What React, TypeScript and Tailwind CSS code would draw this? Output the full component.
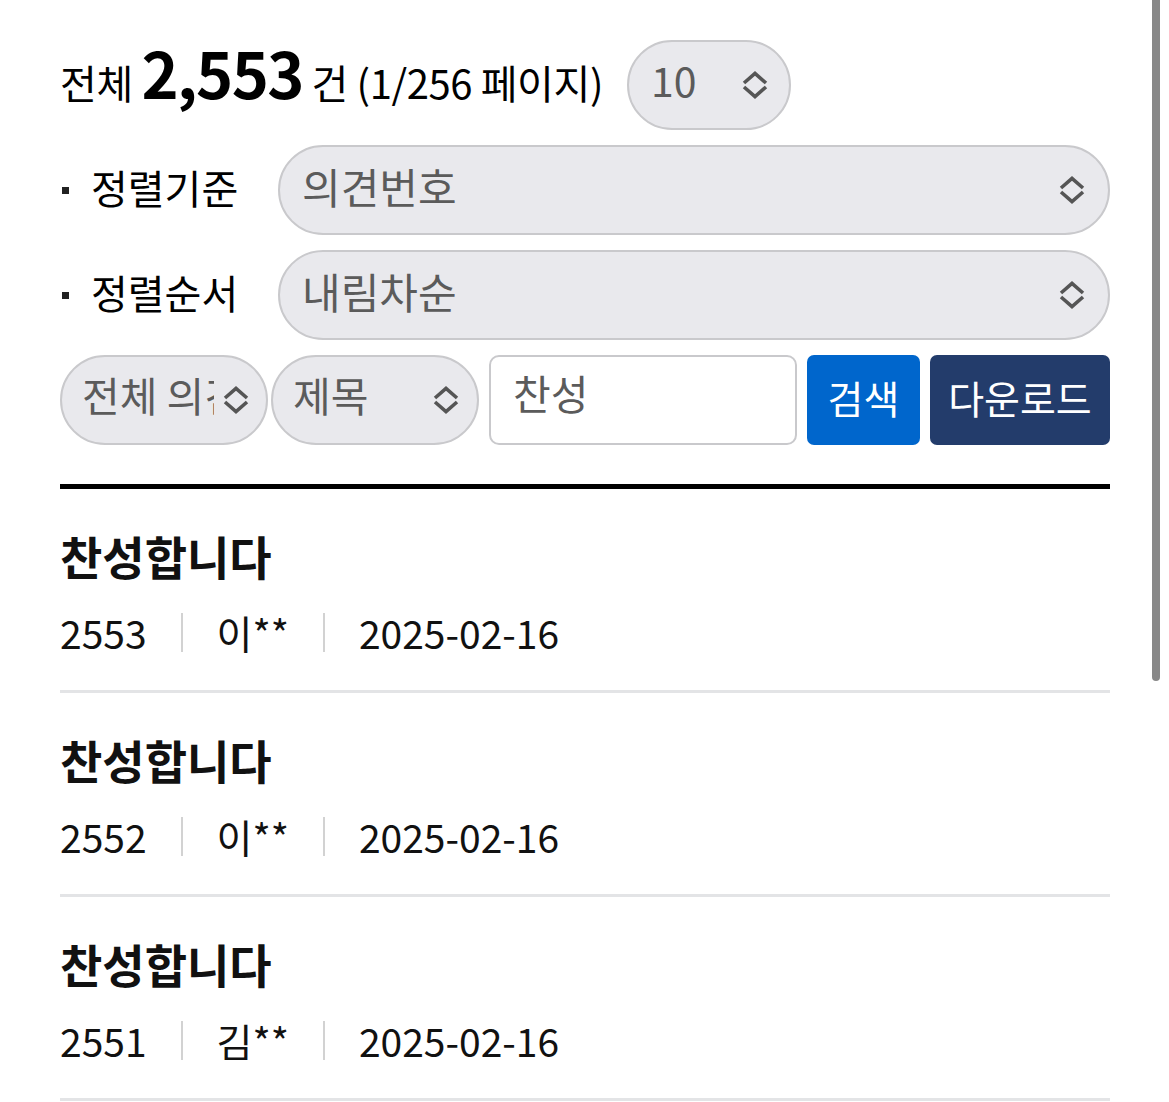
import { useState } from "react"

// Up/down chevron used by every select box
function UpDown() {
  return (
    <svg width="28" height="30" viewBox="0 0 28 30" fill="none" className="shrink-0">
      <path d="M3 13 L14 3.5 L25 13" stroke="#555" strokeWidth="3.6" />
      <path d="M3 17 L14 26.5 L25 17" stroke="#555" strokeWidth="3.6" />
    </svg>
  )
}

function FakeSelect({
  value,
  className = "",
  pad = "pl-[22px] pr-[22px]",
  text = "text-[42px]",
}: {
  value: string
  className?: string
  pad?: string
  text?: string
}) {
  return (
    <div
      className={`flex h-[90px] items-center gap-2 rounded-full border-2 border-[#c9c9cc] bg-[#e9e9ed] ${pad} ${className}`}
    >
      <span className={`min-w-0 flex-1 overflow-hidden whitespace-nowrap pb-[10px] text-[#5b5b5b] ${text}`}>
        {value}
      </span>
      <UpDown />
    </div>
  )
}

const opinions = [
  { no: 2553, name: "이**", date: "2025-02-16" },
  { no: 2552, name: "이**", date: "2025-02-16" },
  { no: 2551, name: "김**", date: "2025-02-16" },
]

export default function App() {
  const [keyword, setKeyword] = useState("찬성")

  return (
    <div className="relative min-h-[1102px] overflow-hidden bg-white font-['Noto_Sans_CJK_KR','Noto_Sans',sans-serif] text-black">
      <div className="pl-[60px] pr-[59px] pt-[40px]">
        {/* count + page size */}
        <div className="flex h-[89px] items-center">
          <p className="mb-[26px] text-[40px] leading-none tracking-[-0.4px]">
            전체 <strong className="text-[63px] font-bold tracking-[-1.5px]">2,553</strong> 건 (1/256 페이지)
          </p>
          <FakeSelect
            value="10"
            className="ml-[24px] h-[89px] w-[164px]"
            pad="pl-[22px] pr-[20px]"
            text="text-[41px]"
          />
        </div>

        {/* sort options */}
        <div className="mt-[16px] flex items-center">
          <div className="flex w-[218px] shrink-0 items-center">
            <span className="ml-[2px] h-[7px] w-[7px] bg-[#222]" />
            <span className="ml-[22px] pb-[6px] text-[40px]">정렬기준</span>
          </div>
          <FakeSelect value="의견번호" className="flex-1" pad="pl-[22px] pr-[22px]" />
        </div>
        <div className="mt-[15px] flex items-center">
          <div className="flex w-[218px] shrink-0 items-center">
            <span className="ml-[2px] h-[7px] w-[7px] bg-[#222]" />
            <span className="ml-[22px] pb-[6px] text-[40px]">정렬순서</span>
          </div>
          <FakeSelect value="내림차순" className="flex-1" pad="pl-[22px] pr-[22px]" />
        </div>

        {/* search bar */}
        <div className="mt-[15px] flex h-[90px] items-stretch">
          <FakeSelect value="전체 의견" className="w-[208px]" pad="pl-[20px] pr-[16px]" text="text-[41px]" />
          <FakeSelect value="제목" className="ml-[3px] w-[208px]" pad="pl-[20px] pr-[17px]" text="text-[41px]" />
          <input
            value={keyword}
            onChange={(e) => setKeyword(e.target.value)}
            className="ml-[10px] w-[308px] rounded-[10px] border-2 border-[#c9c9cc] bg-white pb-[14px] pl-[22px] text-[41px] text-[#5b5b5b] outline-none"
          />
          <button className="ml-[10px] w-[113px] rounded-[7px] bg-[#0066cc] pb-[6px] text-[39px] text-white">
            검색
          </button>
          <button className="ml-[10px] flex-1 rounded-[7px] bg-[#233c6b] pb-[6px] text-[39px] text-white">
            다운로드
          </button>
        </div>

        {/* list */}
        <div className="mt-[39px] h-[5px] bg-black" />
        <ul>
          {opinions.map((o) => (
            <li key={o.no} className="border-b-[3px] border-[#e3e4e6] pb-[30px] pt-[38px]">
              <h3 className="text-[46px] font-bold leading-[56px] text-[#111]">찬성합니다</h3>
              <div className="mt-[21px] flex items-center text-[39px] leading-[56px] text-[#111]">
                <span>{o.no}</span>
                <span className="mx-[34px] h-[39px] w-[2px] bg-[#d2d2d2]" />
                <span>{o.name}</span>
                <span className="mx-[34px] h-[39px] w-[2px] bg-[#d2d2d2]" />
                <span>{o.date}</span>
              </div>
            </li>
          ))}
        </ul>
      </div>

      {/* overlay scrollbar thumb */}
      <div className="absolute right-[9px] top-0 h-[681px] w-[8px] rounded-b-full bg-[#888]" />
    </div>
  )
}
